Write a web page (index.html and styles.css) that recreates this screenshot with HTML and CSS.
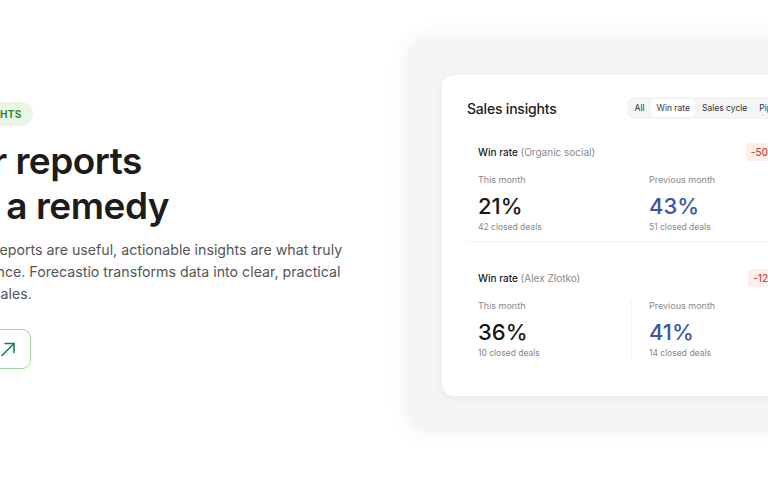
FILE: index.html
```html
<!DOCTYPE html>
<html>
  <head>
    <meta charset="utf-8">
    <link rel="stylesheet" href="styles.css">
    <title>Forecastio - Sales insights</title>
  </head>
  <body>
    <main class="hero">
      <section class="intro">
        <span class="badge">Sales insights</span>
        <h1>Your reports<br>lack a remedy</h1>
        <p class="lead">
          Although reports are useful, actionable insights are what truly<br>
          guide finance. Forecastio transforms data into clear, practical<br>
          steps for sales.
        </p>
        <a class="btn" href="#">
          Explore
          <svg viewBox="0 0 16 16" width="16" height="16" fill="none" stroke="currentColor" stroke-width="1.6" stroke-linecap="round" stroke-linejoin="round">
            <path d="M2 14.5 14 2.5"/>
            <path d="M5 2.5h9v9"/>
          </svg>
        </a>
      </section>

      <section class="preview">
        <div class="card">
          <header class="card-head">
            <h2>Sales insights</h2>
            <nav class="tabs">
              <span>All</span>
              <span class="active">Win rate</span>
              <span>Sales cycle</span>
              <span>Pipeline</span>
            </nav>
          </header>

          <div class="metric">
            <div class="metric-head">
              <span>Win rate <em>(Organic social)</em></span>
              <span class="delta">-50%</span>
            </div>
            <div class="stats">
              <div class="stat">
                <small>This month</small>
                <strong>21%</strong>
                <small>42 closed deals</small>
              </div>
              <div class="stat">
                <small>Previous month</small>
                <strong class="prev">43%</strong>
                <small>51 closed deals</small>
              </div>
            </div>
          </div>

          <div class="metric">
            <div class="metric-head">
              <span>Win rate <em>(Alex Zlotko)</em></span>
              <span class="delta">-12%</span>
            </div>
            <div class="stats split">
              <div class="stat">
                <small>This month</small>
                <strong>36%</strong>
                <small>10 closed deals</small>
              </div>
              <div class="stat">
                <small>Previous month</small>
                <strong class="prev">41%</strong>
                <small>14 closed deals</small>
              </div>
            </div>
          </div>
        </div>
      </section>
    </main>
  </body>
</html>
```

FILE: styles.css
```css
body {
  margin: 0;
  background: #fff;
  font-family: Inter, "Noto Sans", sans-serif;
  color: #1c1c1c;
  overflow: hidden;
}

.hero {
  width: 768px;
  height: 480px;
  display: flex;
  overflow: hidden;
}

/* left column, its start is cut off by the viewport */
.intro {
  flex: none;
  width: 477px;
  margin-left: -70px;
  padding-top: 102px;
}

.badge {
  display: inline-block;
  margin-left: -6px;
  background: #eaf6e6;
  color: #2e8b2e;
  font-size: 10px;
  font-weight: 700;
  letter-spacing: 0.3px;
  text-transform: uppercase;
  padding: 6px 11px;
  border-radius: 12px;
}

h1 {
  margin: 12px 0 0 -4px;
  font-size: 37px;
  line-height: 45px;
  font-weight: 600;
  letter-spacing: -0.5px;
}

.lead {
  margin: 11px 0 0;
  font-size: 14.2px;
  line-height: 22px;
  color: #555;
}

.btn {
  display: inline-flex;
  align-items: center;
  gap: 8px;
  margin: 24px 0 0 -3px;
  height: 38px;
  padding: 0 14px;
  border: 1px solid #9fd69b;
  border-radius: 9px;
  color: #1f7a52;
  text-decoration: none;
  font-size: 14px;
  font-weight: 500;
}

/* right column */
.preview {
  flex: none;
  margin-top: 37px;
  width: 440px;
  height: 395px;
  padding: 38px 0 0 35px;
  box-sizing: border-box;
  background: #f5f5f5;
  border-radius: 22px;
  box-shadow: 0 0 18px 6px #f7f7f7;
}

.card {
  background: #fff;
  border-radius: 12px;
  width: 366px;
  height: 321px;
  box-sizing: border-box;
  padding: 22px 25px 0;
  box-shadow: 0 2px 10px rgba(0, 0, 0, 0.05);
}

.card-head {
  display: flex;
  align-items: center;
  gap: 70px;
  white-space: nowrap;
}

h2 {
  margin: 0;
  font-size: 14px;
  font-weight: 500;
  letter-spacing: -0.2px;
}

.tabs {
  display: flex;
  align-items: center;
  gap: 1px;
  background: #f4f4f4;
  border-radius: 6px;
  padding: 2px 2.5px;
  font-size: 8.5px;
  color: #333;
}

.tabs span {
  padding: 4px 5.5px;
  border-radius: 5px;
}

.tabs .active {
  background: #fff;
}

.metric {
  margin-top: 24px;
  padding: 0 0 8px 11px;
  border-bottom: 1px solid #f3f3f3;
}

.metric + .metric {
  margin-top: 27px;
  border-bottom: none;
}

.metric-head {
  display: flex;
  align-items: center;
  justify-content: space-between;
  font-size: 10px;
  font-weight: 500;
}

.metric-head em {
  font-style: normal;
  font-weight: 400;
  color: #888;
}

.delta {
  background: #fdeeec;
  color: #c84a3a;
  font-size: 10px;
  padding: 3px 5px;
  border-radius: 4px;
}

.stats {
  display: flex;
  margin-top: 13px;
}

.stat {
  flex: none;
  width: 171px;
  display: flex;
  flex-direction: column;
}

.split .stat:first-child {
  border-right: 1px solid #f2f2f2;
  margin-right: 17px;
  width: 153px;
}

.stat small {
  font-size: 9px;
  line-height: 12px;
  color: #888;
}

.stat small + strong + small {
  font-size: 8.5px;
}

.stat strong {
  margin-top: 5px;
  font-size: 22px;
  font-weight: 500;
  line-height: 30px;
  color: #161616;
}

.stat strong.prev {
  color: #3a55a6;
}
```
